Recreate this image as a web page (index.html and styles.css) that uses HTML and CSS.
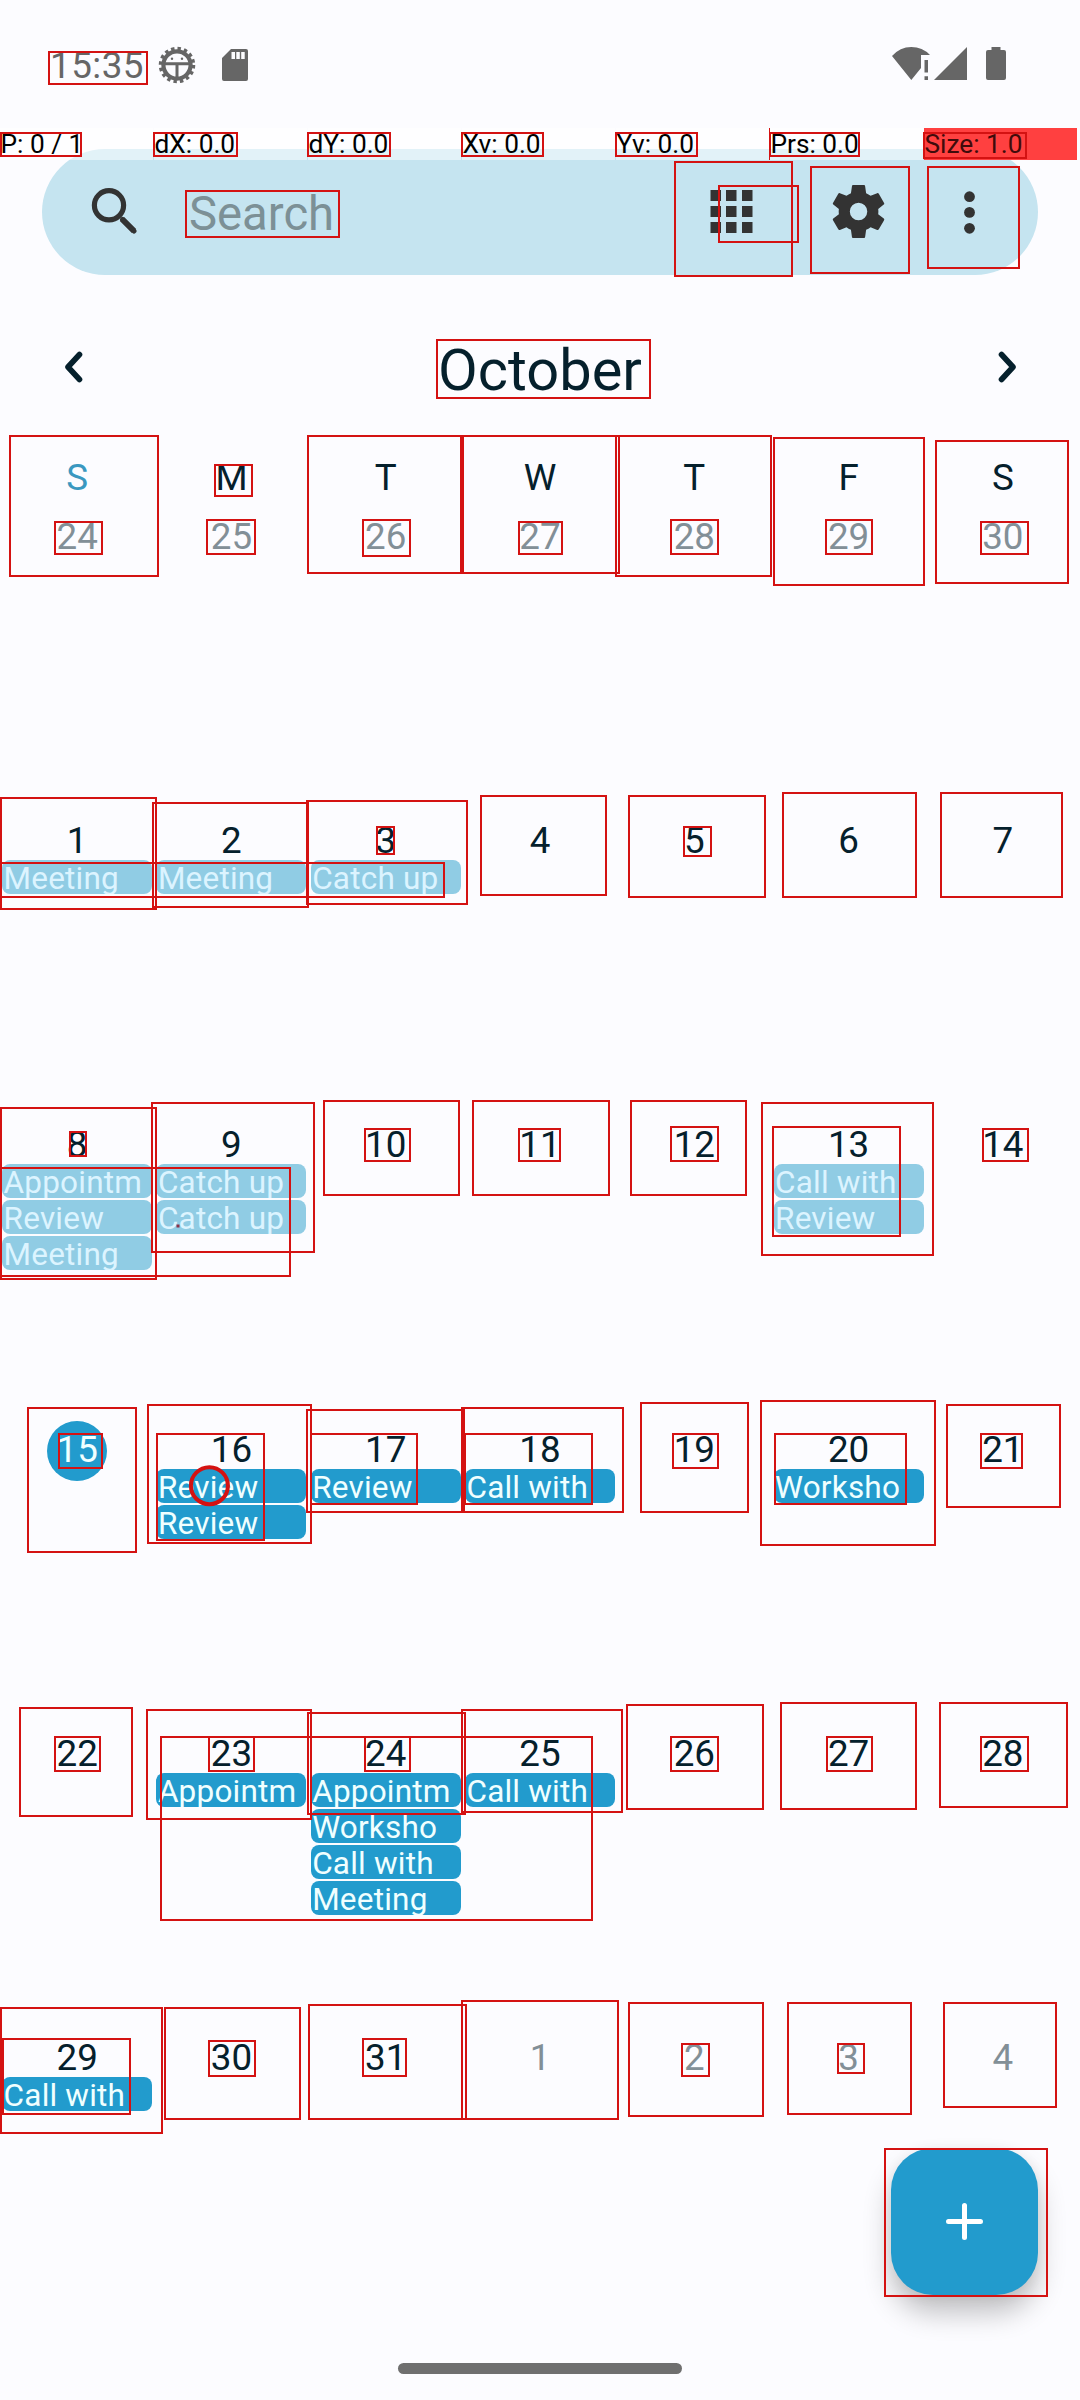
FILE: index.html
```html
<!DOCTYPE html>
<html lang="en">
<head>
<meta charset="utf-8">
<title>Calendar</title>
<link rel="stylesheet" href="styles.css">
</head>
<body>
<div class="screen">
  <header class="status">
    <span class="clock">15:35</span>
    <svg class="bug" width="38" height="38" viewBox="-19 -19 38 38">
      <circle r="16" fill="none" stroke="#666" stroke-width="4.500" stroke-dasharray="3.300 2.984"/>
      <circle r="13.600" fill="none" stroke="#666" stroke-width="4.200"/>
      <path d="M-13-1.200H13M0 0V13" stroke="#666" stroke-width="3"/>
      <circle cx="-5" cy="-6.300" r="1.200" fill="#666"/><circle cx="5" cy="-6.300" r="1.200" fill="#666"/>
    </svg>
    <svg class="sd" width="26" height="32" viewBox="0 0 26 32">
      <path fill="#666" fill-rule="evenodd" d="M9 0H24Q26 0 26 2V30Q26 32 24 32H2Q0 32 0 30V9ZM9.500 3V10H13V3ZM14.300 3V10H17.800V3ZM19.200 3V10H22.700V3Z"/>
    </svg>
    <svg class="signals" width="116" height="34" viewBox="891 47 116 34" fill="#666">
      <path d="M911.300 80 892 56Q900 47 911.300 47 922.500 47 930 55H921V68Z"/>
      <path d="M924.500 60H928V72.500H924.500ZM924.500 76.300H928V80H924.500Z"/>
      <path d="M967 47V80H934Z"/>
      <path d="M991.500 47H1000.500V50H1004Q1006 50 1006 52V78Q1006 80 1004 80H988Q986 80 986 78V52Q986 50 988 50H991.500Z"/>
    </svg>
  </header>

  <div class="search">
    <svg class="lens" width="48" height="48" viewBox="90 186 48 48" fill="none" stroke="#333">
      <circle cx="109" cy="205.300" r="14.600" stroke-width="5.200"/>
      <path d="M122 219 134 231" stroke-width="6"/>
      <path d="M122.500 219.500 134 231" stroke-width="5" stroke-linecap="round"/>
    </svg>
    <span class="hint">Search</span>
    <svg class="actions" width="268" height="54" viewBox="709 185 268 54" fill="#333">
      <path d="M710.500 190h10.500v11h-10.500zM726 190h10.500v11H726zM742 190h10.500v11H742zM710.500 206h10.500v11h-10.500zM726 206h10.500v11H726zM742 206h10.500v11H742zM710.500 222h10.500v11h-10.500zM726 222h10.500v11H726zM742 222h10.500v11H742z"/>
      <path transform="translate(826.800 179.800) scale(2.645)" fill-rule="evenodd" d="M19.430 12.980c.04-.32.07-.64.07-.98s-.03-.66-.07-.98l2.110-1.650c.19-.15.24-.42.12-.64l-2-3.460c-.12-.22-.39-.3-.61-.22l-2.490 1c-.52-.4-1.080-.73-1.690-.98l-.38-2.650C14.460 2.180 14.250 2 14 2h-4c-.25 0-.46.18-.49.42l-.38 2.650c-.61.25-1.170.59-1.690.98l-2.490-1c-.23-.09-.49 0-.61.22l-2 3.460c-.13.22-.07.49.12.64l2.110 1.650c-.04.32-.07.65-.07.98s.03.66.07.98l-2.110 1.650c-.19.15-.24.42-.12.64l2 3.460c.12.22.39.3.61.22l2.490-1c.52.4 1.080.73 1.690.98l.38 2.650c.03.24.24.42.49.42h4c.25 0 .46-.18.49-.42l.38-2.650c.61-.25 1.170-.59 1.690-.98l2.490 1c.23.09.49 0 .61-.22l2-3.460c.12-.22.07-.49-.12-.64l-2.110-1.650zM12 15.300a3.300 3.300 0 1 1 0-6.600 3.300 3.300 0 0 1 0 6.600z"/>
      <circle cx="969.500" cy="196.700" r="5.400"/><circle cx="969.500" cy="212.400" r="5.400"/><circle cx="969.500" cy="228.300" r="5.400"/>
    </svg>
  </div>

  <div class="month">
    <svg width="20" height="32" viewBox="0 0 20 32"><path class="chevron" d="M15.500 3.500 4 16 15.500 28.500"/></svg>
    <h1>October</h1>
    <svg width="20" height="32" viewBox="0 0 20 32"><path class="chevron" d="M4.500 3.500 16 16 4.500 28.500"/></svg>
  </div>

  <div class="weekdays"><span class="sun">S</span><span>M</span><span>T</span><span>W</span><span>T</span><span>F</span><span>S</span></div>

  <main class="days">
    <div class="day out"><b>24</b></div><div class="day out"><b>25</b></div><div class="day out"><b>26</b></div><div class="day out"><b>27</b></div><div class="day out"><b>28</b></div><div class="day out"><b>29</b></div><div class="day out"><b>30</b></div>

    <div class="day past"><b>1</b><i>Meeting</i></div>
    <div class="day past"><b>2</b><i>Meeting</i></div>
    <div class="day past"><b>3</b><i>Catch up</i></div>
    <div class="day"><b>4</b></div><div class="day"><b>5</b></div><div class="day"><b>6</b></div><div class="day"><b>7</b></div>

    <div class="day past"><b>8</b><i>Appointm</i><i>Review</i><i>Meeting</i></div>
    <div class="day past"><b>9</b><i>Catch up</i><i>Catch up</i></div>
    <div class="day"><b>10</b></div><div class="day"><b>11</b></div><div class="day"><b>12</b></div>
    <div class="day past"><b>13</b><i>Call with</i><i>Review</i></div>
    <div class="day"><b>14</b></div>

    <div class="day today"><b>15</b></div>
    <div class="day"><b>16</b><i>Review</i><i>Review</i></div>
    <div class="day"><b>17</b><i>Review</i></div>
    <div class="day"><b>18</b><i>Call with</i></div>
    <div class="day"><b>19</b></div>
    <div class="day"><b>20</b><i>Worksho</i></div>
    <div class="day"><b>21</b></div>

    <div class="day"><b>22</b></div>
    <div class="day"><b>23</b><i>Appointm</i></div>
    <div class="day"><b>24</b><i>Appointm</i><i>Worksho</i><i>Call with</i><i>Meeting</i></div>
    <div class="day"><b>25</b><i>Call with</i></div>
    <div class="day"><b>26</b></div><div class="day"><b>27</b></div><div class="day"><b>28</b></div>

    <div class="day"><b>29</b><i>Call with</i></div>
    <div class="day"><b>30</b></div><div class="day"><b>31</b></div>
    <div class="day out"><b>1</b></div><div class="day out"><b>2</b></div><div class="day out"><b>3</b></div><div class="day out"><b>4</b></div>
  </main>

  <div class="gesture"></div>

  <div class="fab">
    <svg width="37" height="37" viewBox="0 0 37 37"><path d="M2.500 18.500H34.500M18.500 2.500V34.500" stroke="#fff" stroke-width="5" stroke-linecap="round"/></svg>
  </div>

  <div class="pointer"><span>P: 0 / 1</span><span>dX: 0.0</span><span>dY: 0.0</span><span>Xv: 0.0</span><span>Yv: 0.0</span><span>Prs: 0.0</span><span class="full">Size: 1.0</span></div>

  <!-- view bounds overlay -->
  <svg class="bounds" width="1080" height="2400" viewBox="0 0 1080 2400">
    <path d="M769.500 128V160" stroke-width="1"/>
    <path d="
      M49 52H147V84H49z
      M1 133H81V156H1z M154 133H237V156H154z M308 133H390V156H308z M462 133H543V156H462z M616 133H697V156H616z M770 133H859V156H770z M924 133H1026V158H924z
      M186 191H339V237H186z M675 162H792V276H675z M719 186H798V242H719z M811 167H909V273H811z M928 167H1019V268H928z
      M437 340H650V398H437z
      M10 436H158V576H10z M215 465H252V496H215z M55 522H102V554H55z M207 520H255V554H207z M308 436H463V573H308z M363 520H410V556H363z M461 436H619V573H461z M519 522H562V554H519z
      M616 436H771V576H616z M774 438H924V585H774z M936 441H1068V583H936z M671 520H718V554H671z M826 520H872V554H826z M981 522H1028V554H981z
      M1 798H156V909H1z M153 803H308V907H153z M307 801H467V904H307z M1 863H444V897H1z M377 827H394V854H377z M481 796H606V895H481z M629 796H765V897H629z M684 827H711V856H684z M783 793H916V897H783z M941 793H1062V897H941z
      M1 1108H156V1279H1z M152 1103H314V1252H152z M1 1168H290V1276H1z M70 1132H86V1156H70z M324 1101H459V1195H324z M365 1129H410V1161H365z M473 1101H609V1195H473z M519 1129H560V1161H519z
      M631 1101H746V1195H631z M671 1127H718V1161H671z M762 1103H933V1255H762z M773 1127H900V1236H773z M983 1129H1028V1161H983z
      M28 1408H136V1552H28z M59 1434H102V1468H59z M148 1405H311V1543H148z M157 1434H264V1540H157z M307 1410H464V1512H307z M311 1434H417V1504H311z M462 1408H623V1512H462z M465 1434H592V1504H465z
      M641 1403H748V1512H641z M673 1434H718V1468H673z M761 1401H935V1545H761z M775 1434H906V1504H775z M947 1405H1060V1507H947z M981 1434H1022V1468H981z
      M20 1708H132V1816H20z M55 1737H100V1771H55z M147 1710H311V1819H147z M209 1737H254V1771H209z M365 1737H410V1771H365z M161 1737H592V1920H161z M308 1713H465V1814H308z M462 1710H622V1812H462z
      M627 1705H763V1809H627z M671 1737H718V1771H671z M781 1703H916V1809H781z M827 1737H872V1771H827z M940 1703H1067V1807H940z M981 1737H1028V1771H981z
      M1 2008H162V2133H1z M3 2039H130V2114H3z M165 2008H300V2119H165z M209 2041H255V2076H209z M309 2005H466V2119H309z M363 2039H406V2076H363z M462 2001H618V2119H462z
      M629 2003H763V2116H629z M682 2044H709V2076H682z M788 2003H911V2114H788z M838 2044H864V2073H838z M944 2003H1056V2107H944z
      M885 2149H1047V2296H885z"/>
    <circle cx="209.400" cy="1485.700" r="18.500" stroke-width="4"/>
    <path d="M176.500 1226h3" stroke="#8a3048" stroke-width="3"/>
  </svg>
</div>
</body>
</html>
```
FILE: styles.css
```css
* { box-sizing: border-box; margin: 0; padding: 0; }

body { background: #fcfcff; }

.screen {
  position: relative;
  display: flex;
  flex-direction: column;
  width: 1080px;
  height: 2400px;
  overflow: hidden;
  font-family: Roboto, sans-serif;
  color: #05202c;
}

svg { display: block; flex: none; }

.status {
  display: flex;
  align-items: flex-start;
  height: 149px;
  padding: 0 73px 0 50px;
}
.clock { width: 108px; padding-top: 44px; font-size: 36.75px; line-height: 43px; letter-spacing: .5px; color: #666; }
.bug { margin-top: 46px; }
.sd { margin: 49px 0 0 26px; }
.signals { margin: 47px 0 0 auto; }

.search {
  display: flex;
  align-items: center;
  height: 126px;
  margin: 0 42px;
  padding: 0 61px 0 48px;
  border-radius: 63px;
  background: #c5e4f0;
}
.lens { margin-top: -4px; }
.hint { margin: 3px auto 0 51px; font-size: 47.25px; color: #7c9096; }

.month {
  display: flex;
  align-items: center;
  justify-content: space-between;
  height: 160px;
  padding: 0 63px 0 64px;
}
.month svg { margin-top: 24px; }
.month h1 { font-size: 57.75px; font-weight: 400; line-height: 68px; margin: 29px 1px 0 0; }
.chevron { fill: none; stroke: #05202c; stroke-width: 5.6; stroke-linecap: round; stroke-linejoin: round; }

.weekdays {
  display: grid;
  grid-template-columns: repeat(7, 1fr);
  height: 80px;
  padding-top: 21px;
  font-size: 36.75px;
  line-height: 43px;
  text-align: center;
}
.sun { color: #3a98c0; }

.days {
  display: grid;
  grid-template-columns: repeat(7, 1fr);
  grid-template-rows: repeat(6, 304.2px);
}
.day { position: relative; padding: 0 2.1px; }
.day b {
  position: relative;
  display: block;
  height: 43px;
  margin-bottom: -2px;
  font-size: 36.75px;
  font-weight: 400;
  line-height: 43px;
  text-align: center;
}
.out b { color: #828f97; }
.day i {
  display: block;
  height: 34px;
  margin-bottom: 2px;
  padding-left: 1.5px;
  overflow: hidden;
  border-radius: 8px;
  background: #229bcd;
  color: #f0ffff;
  font-size: 31.5px;
  font-style: normal;
  line-height: 38.500px;
  letter-spacing: .2px;
  white-space: nowrap;
}
.past i { background: #90cce4; color: #dcf4ff; }
.today { z-index: 0; }
.today b { color: #f0ffff; }
.today b::before {
  content: "";
  position: absolute;
  z-index: -1;
  left: 45px;
  top: -7px;
  width: 60px;
  height: 60px;
  border-radius: 50%;
  background: #229bcd;
}

.gesture {
  flex: none;
  width: 284px;
  height: 11px;
  margin: 23px auto 0;
  border-radius: 6px;
  background: #6f6f6f;
}

.fab {
  position: absolute;
  left: 891px;
  top: 2148px;
  display: flex;
  align-items: center;
  justify-content: center;
  width: 147px;
  height: 147px;
  border-radius: 42px;
  background: #229bcd;
  box-shadow: 0 18px 28px rgba(0, 0, 0, .24), 0 2px 14px rgba(0, 0, 0, .06);
}

.pointer {
  position: absolute;
  top: 128px;
  left: 0;
  display: grid;
  grid-template-columns: repeat(7, 153px);
  gap: 1px;
  font-size: 26.25px;
  line-height: 32px;
  color: #000;
}
.pointer span { height: 32px; padding-left: .5px; background: rgba(255, 255, 255, .5); white-space: nowrap; }
.pointer .full { background: #ff4040; color: #400b0b; }

.bounds {
  position: absolute;
  left: 0;
  top: 0;
  fill: none;
  stroke: #d41212;
  stroke-width: 2;
  pointer-events: none;
}
```
